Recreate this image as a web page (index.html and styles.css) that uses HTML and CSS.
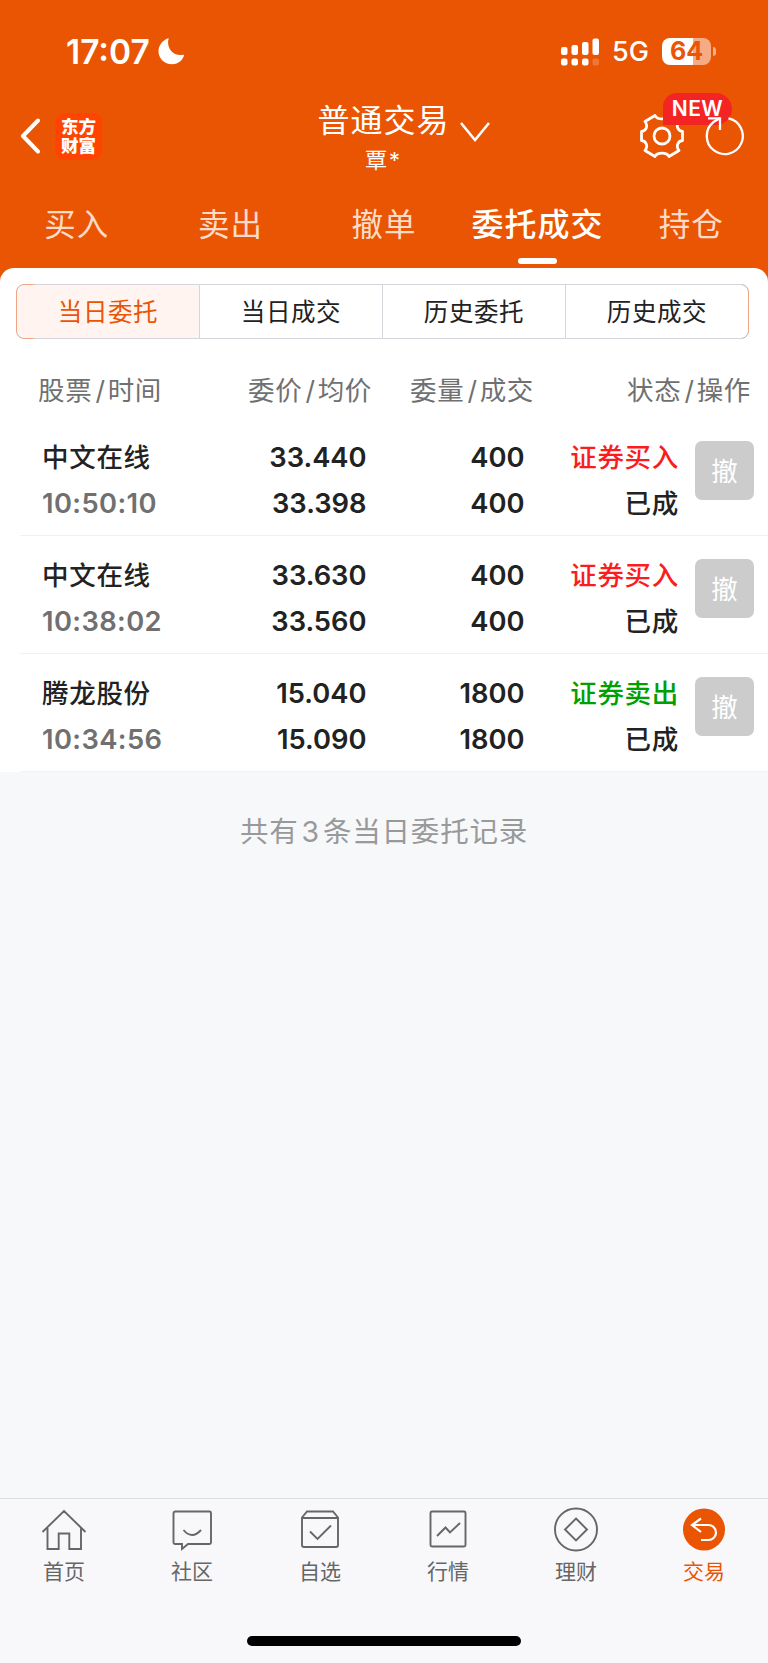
FILE: index.html
```
<!DOCTYPE html>
<html lang="zh-CN">
<head>
    <meta charset="UTF-8">
    <meta name="viewport" content="width=device-width, initial-scale=1.0">
    <title>委托成交</title>
    <link rel="stylesheet" href="styles.css">
</head>
<body>
<header class="header">
    <div class="status-bar">
        <span class="time">17:07</span>
        <svg class="moon" width="26" height="27" viewBox="0 0 26 27"><path fill="#fff" d="M10.5 1.2C8.4 8.6 14 18.6 25 16.8C25.8 16.7 26.2 17 25.9 18C23.8 23.3 19.5 26.2 13.9 26.2C6.4 26.2 0.5 20.6 0.5 13.3C0.5 7.6 4 2.6 9.5 0.4C10.4 0.1 10.8 0.4 10.5 1.2Z"/></svg>
        <svg class="signal" width="39" height="28" viewBox="0 0 39 28" fill="#fff">
            <rect x="0" y="9" width="6.5" height="8" rx="2"/>
            <rect x="10.5" y="7" width="6.5" height="10" rx="2"/>
            <rect x="21" y="4" width="6.5" height="13" rx="2"/>
            <rect x="31.5" y="0.5" width="6.5" height="16.5" rx="2"/>
            <rect x="0" y="20.5" width="6.5" height="7" rx="2"/>
            <rect x="10.5" y="20.5" width="6.5" height="7" rx="2"/>
            <rect x="21" y="20.5" width="6.5" height="7" rx="2"/>
            <rect x="31.5" y="20.5" width="6.5" height="7" rx="2" opacity="0.2"/>
        </svg>
        <span class="network">5G</span>
        <span class="battery">64</span>
        <span class="battery-cap"></span>
    </div>
    <div class="nav-bar">
        <div class="nav-left">
            <svg width="20" height="36" viewBox="0 0 20 36"><path d="M18 2.5L3 18L18 33.5" fill="none" stroke="#fff" stroke-width="4" stroke-linecap="round" stroke-linejoin="round"/></svg>
            <div class="logo">东方<br>财富</div>
        </div>
        <div class="nav-title">
            <div class="account">普通交易<svg class="arrow" width="32" height="22" viewBox="0 0 32 22"><path d="M2 2L16 19L30 2" fill="none" stroke="#fff" stroke-width="2.6"/></svg></div>
            <div class="user">覃<span>*</span></div>
        </div>
        <div class="nav-right">
            <svg class="gear" width="44" height="44" viewBox="0 0 44 44" fill="none" stroke="#fff" stroke-width="2.8" stroke-linejoin="round">
                <path d="M15 1.500C17 6 27 6 29 1.500L39 7.500C35.500 12 38 17 42.500 17.500V26.500C38 27 35.500 32 39 36.500L29 42.500C27 38 17 38 15 42.500L5 36.500C8.500 32 6 27 1.500 26.500V17.500C6 17 8.500 12 5 7.500Z"/>
                <circle cx="22" cy="22" r="8"/>
            </svg>
            <span class="badge">NEW</span>
            <svg class="refresh" width="40" height="42" viewBox="0 0 40 42" fill="none" stroke="#fff" stroke-width="2.3">
                <path d="M16 3.300L9.500 7A18 18 0 1 0 24.500 3.400"/>
                <path d="M4 3.300H16V15"/>
            </svg>
        </div>
    </div>
    <nav class="tabs">
        <span>买入</span>
        <span>卖出</span>
        <span>撤单</span>
        <span class="on">委托成交</span>
        <span>持仓</span>
    </nav>
</header>

<main class="panel">
    <div class="segment">
        <span class="on">当日委托</span>
        <span>当日成交</span>
        <span>历史委托</span>
        <span>历史成交</span>
    </div>
    <div class="row thead">
        <span>股票<i>/</i>时间</span>
        <span>委价<i>/</i>均价</span>
        <span>委量<i>/</i>成交</span>
        <span>状态<i>/</i>操作</span>
    </div>
    <div class="row item">
        <div class="stock"><b>中文在线</b><em>10:50:10</em></div>
        <div class="num"><b>33.440</b><b>33.398</b></div>
        <div class="num"><b>400</b><b>400</b></div>
        <div class="state"><b class="buy">证券买入</b><b>已成</b></div>
        <div class="cancel">撤</div>
    </div>
    <div class="row item">
        <div class="stock"><b>中文在线</b><em>10:38:02</em></div>
        <div class="num"><b>33.630</b><b>33.560</b></div>
        <div class="num"><b>400</b><b>400</b></div>
        <div class="state"><b class="buy">证券买入</b><b>已成</b></div>
        <div class="cancel">撤</div>
    </div>
    <div class="row item">
        <div class="stock"><b>腾龙股份</b><em>10:34:56</em></div>
        <div class="num"><b>15.040</b><b>15.090</b></div>
        <div class="num"><b>1800</b><b>1800</b></div>
        <div class="state"><b class="sell">证券卖出</b><b>已成</b></div>
        <div class="cancel">撤</div>
    </div>
</main>
<p class="total">共有<i>3</i>条当日委托记录</p>

<footer class="footer">
    <div class="menu">
        <div class="menu-item">
            <svg width="48" height="48" viewBox="0 0 48 48"><path d="M2.500 26L24 5L45.500 26M7.500 22V43H18.700V27.500H29.300V43H41V22"/></svg>
            <span>首页</span>
        </div>
        <div class="menu-item">
            <svg width="48" height="48" viewBox="0 0 48 48"><path d="M7.500 5.500H41.500Q43 5.500 43 7V36.500Q43 38 41.500 38H20L14 43V38H7Q5.500 38 5.500 36.500V7.500Q5.500 5.500 7.500 5.500ZM15.500 24Q24 34 33 24"/></svg>
            <span>社区</span>
        </div>
        <div class="menu-item">
            <svg width="48" height="48" viewBox="0 0 48 48"><path d="M11 5.500H37L42 11.500V39Q42 41 40 41H8Q6 41 6 39V11.500ZM6 12H42M14 25.500L21.500 33L35 19.500"/></svg>
            <span>自选</span>
        </div>
        <div class="menu-item">
            <svg width="48" height="48" viewBox="0 0 48 48"><rect x="6.500" y="5.500" width="35" height="35" rx="1.500"/><path d="M13 30L21.500 21.500L26 26.500L36 17"/></svg>
            <span>行情</span>
        </div>
        <div class="menu-item">
            <svg width="48" height="48" viewBox="0 0 48 48"><circle cx="24" cy="23.500" r="21"/><path d="M24 12.500L35 23.500L24 34.500L13 23.500Z"/></svg>
            <span>理财</span>
        </div>
        <div class="menu-item on">
            <svg width="48" height="48" viewBox="0 0 48 48"><circle cx="24" cy="23.500" r="21"/><path d="M21 12.500L12 19L21 26M12 19H28.500A7.500 7.500 0 0 1 28.500 34H21"/></svg>
            <span>交易</span>
        </div>
    </div>
    <div class="home-bar"></div>
</footer>
</body>
</html>
```

FILE: styles.css
```
*{
    box-sizing: border-box;
}
body{
    margin: 0;
    height: 1663px;
    display: flex;
    flex-direction: column;
    background: #f7f8fa;
    color: #222;
    font-family: Inter, "Noto Sans CJK SC", sans-serif;
}
i, em{
    font-style: normal;
}
svg{
    display: block;
    flex: none;
}
.header{
    height: 282px;
    flex: none;
    background: #ea5504;
    color: #fff;
}
.status-bar{
    height: 96px;
    padding: 7px 52px 0 66px;
    display: flex;
    align-items: center;
}
.time{
    font-size: 33.5px;
    font-weight: 600;
    width: 92px;
}
.signal{
    margin-left: 377px;
}
.network{
    font-size: 27px;
    font-weight: 500;
    margin-left: 12px;
    width: 50px;
}
.battery{
    width: 49px;
    height: 27px;
    border-radius: 8px;
    background: linear-gradient(90deg, #fff 64%, #f5ab84 64%);
    color: #ea5504;
    font-size: 25px;
    font-weight: 700;
    line-height: 27px;
    text-align: center;
}
.battery-cap{
    width: 3px;
    height: 9px;
    margin-left: 2px;
    border-radius: 0 4px 4px 0;
    background: #f5ab84;
}
.nav-bar{
    height: 80px;
    padding: 0 24px 0 20px;
    display: grid;
    grid-template-columns: 1fr auto 1fr;
}
.nav-left{
    display: flex;
    align-items: center;
    gap: 15px;
}
.logo{
    width: 47px;
    height: 47px;
    border-radius: 9px;
    background: #ff4300;
    font-size: 17.5px;
    font-weight: 900;
    line-height: 19px;
    text-align: center;
    padding-top: 4px;
}
.nav-title{
    padding: 2px 0 0 1px;
    text-align: center;
}
.account{
    position: relative;
    left: 1px;
    font-size: 32px;
    letter-spacing: 1px;
    line-height: 46px;
}
.arrow{
    position: absolute;
    left: 142px;
    top: 23px;
}
.user{
    font-size: 22px;
    line-height: 32px;
}
.user span{
    margin-left: 2px;
}
.nav-right{
    position: relative;
    display: flex;
    justify-content: flex-end;
    align-items: center;
    gap: 20px;
}
.badge{
    position: absolute;
    right: 12px;
    top: -3px;
    width: 69px;
    height: 32px;
    border-radius: 14px 16px 16px 0;
    background: #f52424;
    font-size: 21px;
    font-weight: 600;
    letter-spacing: .5px;
    line-height: 32px;
    text-align: center;
}
.refresh{
    position: relative;
}
.tabs{
    display: grid;
    grid-template-columns: repeat(5, 1fr);
    height: 92px;
    font-size: 31.5px;
    letter-spacing: 1px;
    line-height: 97px;
    text-align: center;
    color: #fcdcc8;
}
.tabs .on{
    position: relative;
    color: #fff;
    font-weight: 500;
    font-size: 32px;
    white-space: nowrap;
}
.tabs .on:after{
    content: "";
    position: absolute;
    left: 57px;
    top: 82px;
    width: 39px;
    height: 6px;
    border-radius: 3px;
    background: #fff;
}
.panel{
    flex: none;
    margin-top: -14px;
    padding-top: 16px;
    border-radius: 14px 14px 0 0;
    background: #fff;
}
.segment{
    position: relative;
    display: flex;
    height: 55px;
    margin: 0 19px 0 16px;
    border: 1px solid #d3d6da;
    border-radius: 8px;
}
/* 两端圆角的橙色描边 */
.segment:before{
    content: "";
    position: absolute;
    inset: -1px;
    border: 1px solid #eda583;
    border-radius: 8px;
    -webkit-mask: linear-gradient(90deg, #000 16px, transparent 20px, transparent calc(100% - 8px), #000 calc(100% - 6px));
    mask: linear-gradient(90deg, #000 16px, transparent 20px, transparent calc(100% - 8px), #000 calc(100% - 6px));
}
.segment span{
    flex: 1;
    font-size: 24.5px;
    letter-spacing: .6px;
    line-height: 54px;
    text-align: center;
}
.segment span + span{
    border-left: 1px solid #d3d6da;
}
.segment .on{
    color: #ea5504;
    background: #fff4f0;
    border-radius: 7px 0 0 7px;
}
.row{
    display: grid;
}
.thead{
    grid-template-columns: 210px 162px 217px 123px;
    height: 79px;
    padding-left: 38px;
    font-size: 26.5px;
    letter-spacing: .7px;
    line-height: 102px;
    color: #707070;
    white-space: nowrap;
}
.thead i{
    margin: 0 2px 0 3px;
}
.item{
    grid-template-columns: 180px 145px 158px 154px 59px;
    height: 118px;
    margin-left: 20px;
    padding: 17px 0 0 22px;
    border-bottom: 1px solid #f2f2f3;
    font-size: 26.5px;
    line-height: 45.5px;
}
.item b, .item em{
    display: block;
    font-weight: 500;
    letter-spacing: .7px;
    white-space: nowrap;
}
.item .num{
    text-align: right;
}
.item .num b, .item em{
    font-size: 27.3px;
    font-weight: 600;
}
.item .num b{
    padding-right: .5px;
    letter-spacing: 0;
}
.item em{
    color: #707070;
    letter-spacing: .4px;
}
.state{
    text-align: right;
}
.item .buy{
    color: #fb1d1d;
}
.item .sell{
    color: #00a000;
}
.cancel{
    width: 59px;
    height: 59px;
    margin: 6px 0 0 16px;
    border-radius: 7px;
    background: #ccc;
    color: #fff;
    line-height: 60px;
    text-align: center;
}
.total{
    margin: 37px 0 0;
    font-size: 28.5px;
    letter-spacing: .8px;
    line-height: 46px;
    text-align: center;
    color: #999;
}
.total i{
    margin: 0 3px;
}
.footer{
    height: 165px;
    margin-top: auto;
    border-top: 1px solid #dedfe1;
    background: #f8f8fb;
}
.menu{
    display: grid;
    grid-template-columns: repeat(6, 1fr);
    height: 137px;
    padding-top: 7px;
}
.menu-item{
    display: flex;
    flex-direction: column;
    align-items: center;
    font-size: 21px;
    line-height: 35px;
    color: #666;
}
.menu-item svg{
    fill: none;
    stroke: #666;
    stroke-width: 1.9;
}
.menu-item.on{
    color: #ea5504;
}
.menu-item.on svg{
    stroke: #fff;
    stroke-width: 2.2;
}
.menu-item.on circle{
    fill: #ea5504;
    stroke: none;
}
.home-bar{
    width: 274px;
    height: 10px;
    margin: 0 auto;
    border-radius: 5px;
    background: #000;
}
```
